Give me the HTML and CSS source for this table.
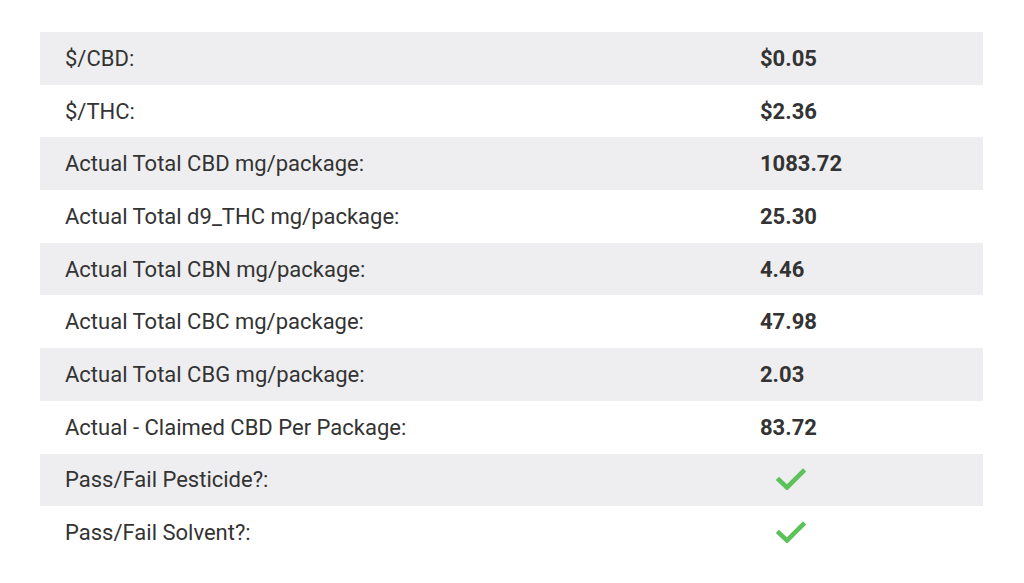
FILE: index.html
```html
<!DOCTYPE html>
<html>
<head>
<meta charset="utf-8">
<link rel="stylesheet" href="styles.css">
</head>
<body>
<div class="wrap">
<table class="specs">
<tbody>
<tr><td class="label">$/CBD:</td><td class="value">$0.05</td></tr>
<tr><td class="label">$/THC:</td><td class="value">$2.36</td></tr>
<tr><td class="label">Actual Total CBD mg/package:</td><td class="value">1083.72</td></tr>
<tr><td class="label">Actual Total d9_THC mg/package:</td><td class="value">25.30</td></tr>
<tr><td class="label">Actual Total CBN mg/package:</td><td class="value">4.46</td></tr>
<tr><td class="label">Actual Total CBC mg/package:</td><td class="value">47.98</td></tr>
<tr><td class="label">Actual Total CBG mg/package:</td><td class="value">2.03</td></tr>
<tr><td class="label">Actual - Claimed CBD Per Package:</td><td class="value">83.72</td></tr>
<tr><td class="label">Pass/Fail Pesticide?:</td><td class="value"><svg class="check" width="30" height="22" viewBox="0 0 30 22"><path d="M3 12 L11 19.5 L27 3.5" fill="none" stroke="#5cc35a" stroke-width="4.6" stroke-linecap="square"/></svg></td></tr>
<tr><td class="label">Pass/Fail Solvent?:</td><td class="value"><svg class="check" width="30" height="22" viewBox="0 0 30 22"><path d="M3 12 L11 19.5 L27 3.5" fill="none" stroke="#5cc35a" stroke-width="4.6" stroke-linecap="square"/></svg></td></tr>
</tbody>
</table>
</div>
</body>
</html>
```
FILE: styles.css
```css
html, body {
  margin: 0;
  padding: 0;
  background: #ffffff;
}
.wrap {
  padding: 32px 41px 0 40px;
}
.specs {
  width: 943px;
  border-collapse: collapse;
  font-family: Roboto, "Liberation Sans", sans-serif;
  font-size: 22px;
  color: #333333;
}
.specs tr {
  height: 52.7px;
}
.specs tr:nth-child(odd) {
  background: #eeeef0;
}
.specs td {
  padding: 0;
  vertical-align: middle;
}
.label {
  width: 695px;
  padding-left: 25px !important;
}
.value {
  font-weight: 700;
}
.check {
  display: block;
  margin-left: 16px;
  margin-top: -2px;
}
```
